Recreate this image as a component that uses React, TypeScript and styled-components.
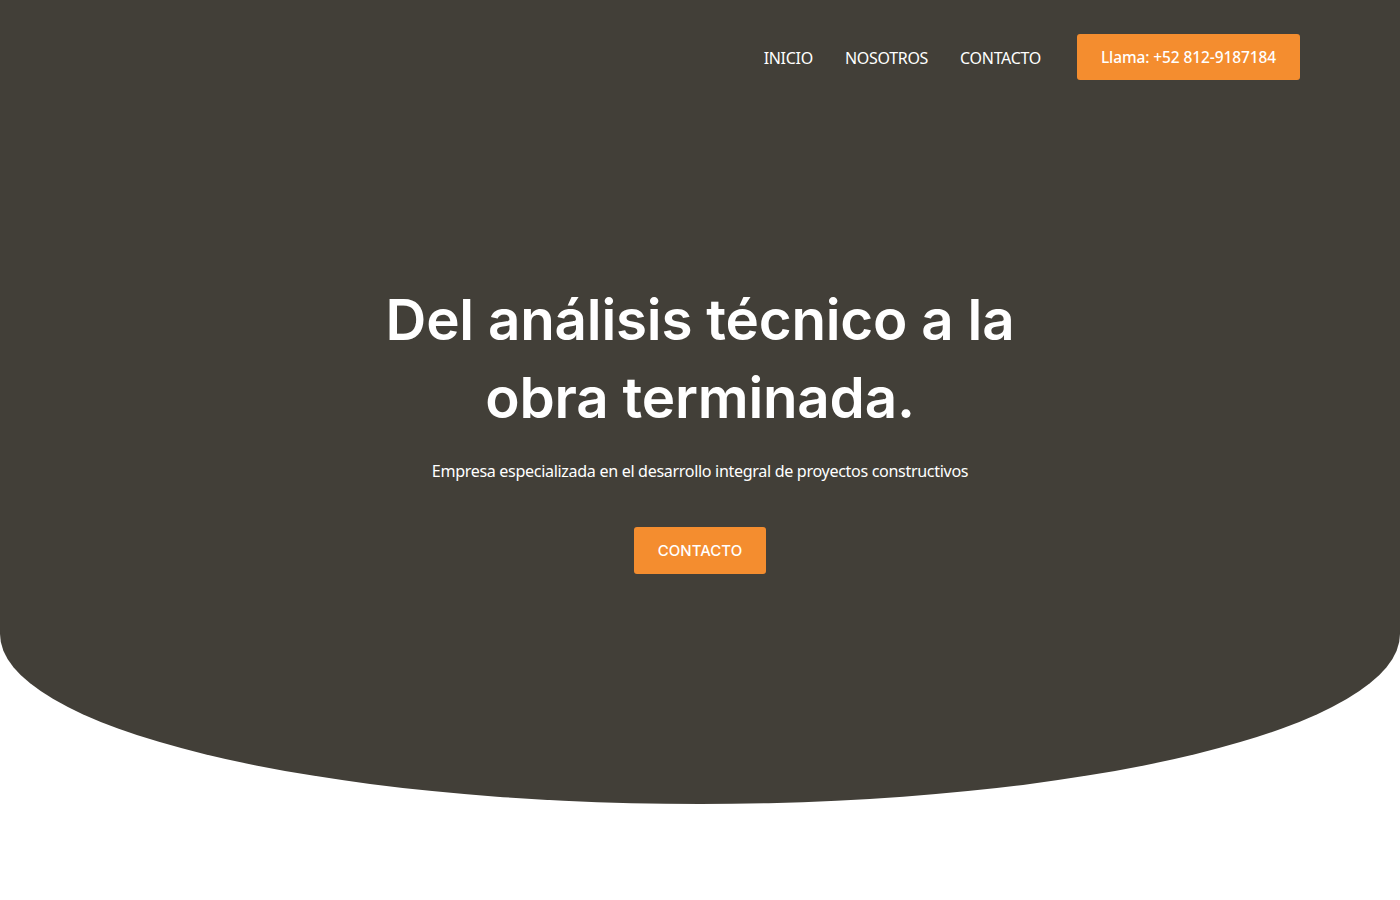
import React from 'react';
import styled, { createGlobalStyle } from 'styled-components';

const GlobalStyle = createGlobalStyle`
  html, body {
    margin: 0;
    padding: 0;
    background: #ffffff;
  }
  * {
    box-sizing: border-box;
  }
`;

const Page = styled.div`
  min-height: 900px;
  background: #ffffff;
`;

const Hero = styled.section`
  height: 804px;
  background-color: #423f38;
  border-radius: 0 0 50% 50% / 0 0 170px 170px;
  display: flex;
  flex-direction: column;
`;

const Header = styled.header`
  width: 1200px;
  margin: 0 auto;
  padding-top: 34px;
  display: flex;
  justify-content: flex-end;
  align-items: center;
`;

const Nav = styled.nav`
  display: flex;
  align-items: center;
  gap: 32px;
  margin-right: 36px;
  padding-top: 2px;
`;

const NavLink = styled.a`
  font-family: "Noto Sans", "Open Sans", sans-serif;
  font-size: 16px;
  letter-spacing: -0.3px;
  color: #ffffff;
  text-decoration: none;
  text-transform: uppercase;
  cursor: pointer;
`;

const OrangeButton = styled.a<{ $wide?: boolean }>`
  display: inline-flex;
  align-items: center;
  justify-content: center;
  height: ${p => (p.$wide ? '46px' : '47px')};
  width: ${p => (p.$wide ? '223px' : '132px')};
  background-color: #f48d2f;
  color: #ffffff;
  border-radius: 3px;
  font-family: ${p => (p.$wide ? '"Noto Sans", sans-serif' : 'Inter, "Liberation Sans", sans-serif')};
  font-size: ${p => (p.$wide ? '15.5px' : '15px')};
  font-weight: 500;
  letter-spacing: ${p => (p.$wide ? '-0.1px' : '0')};
  text-decoration: none;
  cursor: pointer;
`;

const HeroContent = styled.div`
  display: flex;
  flex-direction: column;
  align-items: center;
  text-align: center;
  margin-top: 201px;
`;

const Title = styled.h1`
  margin: 0;
  font-family: Inter, "Liberation Sans", sans-serif;
  font-size: 56.5px;
  font-weight: 600;
  line-height: 78px;
  letter-spacing: -0.2px;
  color: #ffffff;
  max-width: 720px;
`;

const Subtitle = styled.p`
  margin: 23px 0 0;
  font-family: "Noto Sans", "Open Sans", sans-serif;
  font-size: 16.1px;
  letter-spacing: -0.33px;
  color: #ffffff;
`;

const CtaRow = styled.div`
  margin-top: 45px;
`;

export default function App() {
  return (
    <>
      <GlobalStyle />
      <Page>
        <Hero>
          <Header>
            <Nav>
              <NavLink>Inicio</NavLink>
              <NavLink>Nosotros</NavLink>
              <NavLink>Contacto</NavLink>
            </Nav>
            <OrangeButton $wide>Llama: +52 812-9187184</OrangeButton>
          </Header>
          <HeroContent>
            <Title>
              Del análisis técnico a la
              <br />
              obra terminada.
            </Title>
            <Subtitle>Empresa especializada en el desarrollo integral de proyectos constructivos</Subtitle>
            <CtaRow>
              <OrangeButton>CONTACTO</OrangeButton>
            </CtaRow>
          </HeroContent>
        </Hero>
      </Page>
    </>
  );
}
